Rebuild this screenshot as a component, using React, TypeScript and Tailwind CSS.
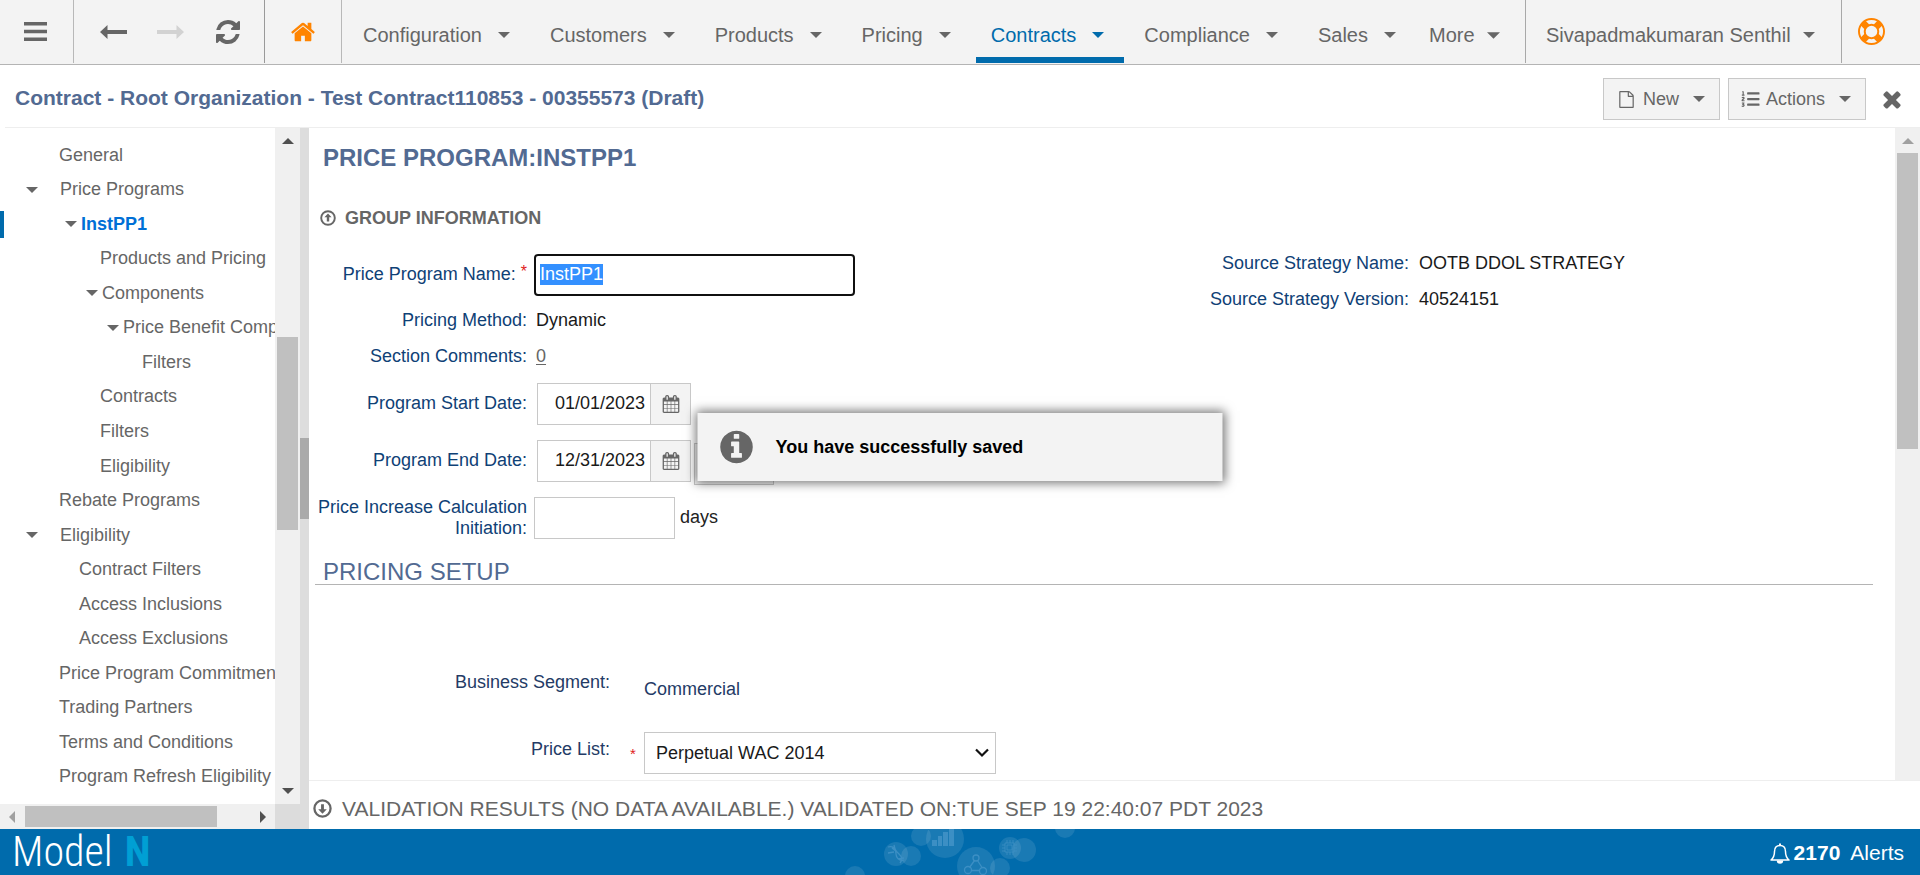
import { useEffect, useRef } from "react";
import type { ReactNode } from "react";
import { FaListOl } from "react-icons/fa";

type CaretProps = { className?: string };

function Caret({ className = "h-1.5 w-3" }: CaretProps) {
  return (
    <svg className={`shrink-0 ${className}`} viewBox="0 0 12 6" fill="currentColor" aria-hidden="true">
      <path d="M0 0h12L6 6z" />
    </svg>
  );
}

type GlyphProps = { path: string; className: string };

function Glyph({ path, className }: GlyphProps) {
  return (
    <svg className={`shrink-0 ${className}`} viewBox="0 0 1792 1792" fill="currentColor" aria-hidden="true">
      <path d={path} />
    </svg>
  );
}

const REFRESH =
  "M1639 1056q0 5-1 7-64 268-268 434.5t-478 166.5q-146 0-282.5-55t-243.5-157l-129 129q-19 19-45 19t-45-19-19-45v-448q0-26 19-45t45-19h448q26 0 45 19t19 45-19 45l-137 137q71 66 161 102t187 36q134 0 250-65t186-179q11-17 53-117 8-23 30-23h192q13 0 22.5 9.5t9.5 22.5zm25-800v448q0 26-19 45t-45 19h-448q-26 0-45-19t-19-45 19-45l138-138q-148-137-349-137-134 0-250 65t-186 179q-11 17-53 117-8 23-30 23h-199q-13 0-22.5-9.5t-9.5-22.5v-7q65-268 270-434.5t480-166.5q146 0 284 55.5t245 156.5l130-129q19-19 45-19t45 19 19 45z";
const HOME =
  "M1472 992v480q0 26-19 45t-45 19h-384v-384h-256v384h-384q-26 0-45-19t-19-45v-480q0-1 .5-3t.5-3l575-474 575 474q1 2 1 6zm223-69l-62 74q-8 9-21 11h-3q-13 0-21-7l-692-577-692 577q-12 8-24 7-13-2-21-11l-62-74q-8-10-7-23.5t11-21.5l719-599q32-26 76-26t76 26l244 204v-195q0-14 9-23t23-9h192q14 0 23 9t9 23v408l219 182q10 8 11 21.5t-7 23.5z";
const TIMES =
  "M1490 1322q0 40-28 68l-136 136q-28 28-68 28t-68-28l-294-294-294 294q-28 28-68 28t-68-28l-136-136q-28-28-28-68t28-68l294-294-294-294q-28-28-28-68t28-68l136-136q28-28 68-28t68 28l294 294 294-294q28-28 68-28t68 28l136 136q28 28 28 68t-28 68l-294 294 294 294q28 28 28 68z";
const INFO =
  "M1152 1376v-160q0-14-9-23t-23-9h-96v-512q0-14-9-23t-23-9h-320q-14 0-23 9t-9 23v160q0 14 9 23t23 9h96v320h-96q-14 0-23 9t-9 23v160q0 14 9 23t23 9h448q14 0 23-9t9-23zm-128-896v-160q0-14-9-23t-23-9h-192q-14 0-23 9t-9 23v160q0 14 9 23t23 9h192q14 0 23-9t9-23zm640 416q0 209-103 385.5t-279.5 279.5-385.5 103-385.5-103-279.5-279.5-103-385.5 103-385.5 279.5-279.5 385.5-103 385.5 103 279.5 279.5 103 385.5z";
const FILE =
  "M1596 380q28 28 48 76t20 88v1152q0 40-28 68t-68 28h-1344q-40 0-68-28t-28-68v-1600q0-40 28-68t68-28h896q40 0 88 20t76 48zm-444-244v376h376q-10-29-22-41l-313-313q-12-12-41-22zm384 1528v-1024h-416q-40 0-68-28t-28-68v-416h-768v1536h1280z";
const CALENDAR =
  "M192 1664h288v-288h-288v288zm352 0h320v-288h-320v288zm-352-352h288v-320h-288v320zm352 0h320v-320h-320v320zm-352-384h288v-288h-288v288zm736 736h320v-288h-320v288zm-384-736h320v-288h-320v288zm768 736h288v-288h-288v288zm-384-352h320v-320h-320v320zm-352-864v-288q0-13-9.5-22.5t-22.5-9.5h-64q-13 0-22.5 9.5t-9.5 22.5v288q0 13 9.5 22.5t22.5 9.5h64q13 0 22.5-9.5t9.5-22.5zm736 864h288v-320h-288v320zm-384-384h320v-288h-320v288zm384 0h288v-288h-288v288zm32-480v-288q0-13-9.5-22.5t-22.5-9.5h-64q-13 0-22.5 9.5t-9.5 22.5v288q0 13 9.5 22.5t22.5 9.5h64q13 0 22.5-9.5t9.5-22.5zm384-64v1280q0 52-38 90t-90 38h-1408q-52 0-90-38t-38-90v-1280q0-52 38-90t90-38h128v-96q0-66 47-113t113-47h64q66 0 113 47t47 113v96h384v-96q0-66 47-113t113-47h64q66 0 113 47t47 113v96h128q52 0 90 38t38 90z";
const LIFE_RING =
  "M896 0q182 0 348 71t286 191 191 286 71 348-71 348-191 286-286 191-348 71-348-71-286-191-191-286-71-348 71-348 191-286 286-191 348-71zm0 128q-190 0-361 90l194 194q82-28 167-28t167 28l194-194q-171-90-361-90zm-678 1129l194-194q-28-82-28-167t28-167l-194-194q-90 171-90 361t90 361zm678 407q190 0 361-90l-194-194q-82 28-167 28t-167-28l-194 194q171 90 361 90zm0-384q159 0 271.5-112.5t112.5-271.5-112.5-271.5-271.5-112.5-271.5 112.5-112.5 271.5 112.5 271.5 271.5 112.5zm484-217l194 194q90-171 90-361t-90-361l-194 194q28 82 28 167t-28 167z";

const MENU = ["Configuration", "Customers", "Products", "Pricing", "Contracts", "Compliance", "Sales"];

function ArrowLong({ className = "" }: CaretProps) {
  return (
    <svg className={`h-[14px] w-[27px] ${className}`} viewBox="0 0 27 14" fill="currentColor" aria-hidden="true">
      <path d="M0 7 7.500 0v5H27v4H7.500v5z" />
    </svg>
  );
}

function TopBar() {
  return (
    <header className="flex h-[65px] shrink-0 border-b border-[#b4b4b4] bg-[#f3f3f3] text-[20px] text-[#666]">
      <div className="flex h-[63px] min-w-0 flex-1">
        <button aria-label="Menu" className="flex w-[74px] items-center border-r border-[#b8b8b8] pl-6">
          <svg className="h-[19px] w-[23px]" viewBox="0 0 23 19" fill="currentColor" aria-hidden="true">
            <path d="M0 0h23v3.500H0zM0 7.700h23v3.500H0zM0 15.400h23v3.500H0z" />
          </svg>
        </button>
        <div className="flex w-[191px] items-center gap-[30px] border-r border-[#999] pl-[26px]">
          <button aria-label="Back">
            <ArrowLong />
          </button>
          <button aria-label="Forward" className="text-[#d2d2d2]">
            <ArrowLong className="rotate-180" />
          </button>
          <button aria-label="Refresh">
            <Glyph path={REFRESH} className="h-7 w-7" />
          </button>
        </div>
        <button aria-label="Home" className="flex w-[77px] items-center border-r border-[#b8b8b8] pl-[25px] text-[#ff8400]">
          <Glyph path={HOME} className="h-[26px] w-[26px]" />
        </button>
        <nav className="ml-1.5 flex gap-[5px]">
          {MENU.map((m) => (
            <button
              key={m}
              className={
                m === "Contracts"
                  ? "flex items-center gap-4 border-b-6 border-[#006bac] pt-[13px] pr-5 pl-[15px] text-[#006bac]"
                  : "flex items-center gap-4 border-b-6 border-transparent pt-[13px] pr-5 pl-[15px]"
              }
            >
              {m}
              <Caret />
            </button>
          ))}
          <button className="flex items-center gap-3 border-b-6 border-transparent pt-[13px] pl-2">
            More
            <Caret className="h-[7px] w-[13px]" />
          </button>
        </nav>
        <button className="ml-auto flex w-[317px] items-center justify-between border-r border-l border-[#a8a8a8] pt-[7px] pr-[26px] pl-5">
          Sivapadmakumaran Senthil
          <Caret />
        </button>
        <button aria-label="Help" className="flex w-[78px] items-center pl-4 text-[#ff8400]">
          <Glyph path={LIFE_RING} className="h-[27px] w-[27px]" />
        </button>
      </div>
    </header>
  );
}

function TitleBar() {
  return (
    <div className="flex h-[62px] shrink-0 items-center pr-[15px] pl-[15px] text-[#666]">
      <h1 className="flex-1 pt-1 text-[21px] font-bold text-[#526a92]">
        Contract - Root Organization - Test Contract110853 - 00355573 (Draft)
      </h1>
      <div className="flex items-center pt-1.5">
        <button className="flex h-[42px] w-[117px] items-center border border-[#c8c8c8] bg-[#f3f3f3] pl-3.5 text-[18px]">
          <Glyph path={FILE} className="mr-2 h-[19px] w-[17px]" />
          New
          <Caret className="ml-auto mr-3.5 h-1.5 w-3" />
        </button>
        <button className="ml-2 flex h-[42px] w-[138px] items-center border border-[#c8c8c8] bg-[#f3f3f3] pl-3 text-[18px]">
          <FaListOl className="mr-1.5 h-[18px] w-[19px]" aria-hidden="true" />
          Actions
          <Caret className="ml-auto mr-3.5 h-1.5 w-3" />
        </button>
        <button aria-label="Close" className="ml-[13px]">
          <Glyph path={TIMES} className="h-[26px] w-[26px]" />
        </button>
      </div>
    </div>
  );
}

type TreeItem = { label: string; indent: string; open?: boolean; top?: boolean; selected?: boolean };

const TREE: TreeItem[] = [
  { label: "General", indent: "pl-[59px]" },
  { label: "Price Programs", indent: "pl-[26px]", open: true, top: true },
  { label: "InstPP1", indent: "pl-[65px]", open: true, selected: true },
  { label: "Products and Pricing", indent: "pl-[100px]" },
  { label: "Components", indent: "pl-[86px]", open: true },
  { label: "Price Benefit Components", indent: "pl-[107px]", open: true },
  { label: "Filters", indent: "pl-[142px]" },
  { label: "Contracts", indent: "pl-[100px]" },
  { label: "Filters", indent: "pl-[100px]" },
  { label: "Eligibility", indent: "pl-[100px]" },
  { label: "Rebate Programs", indent: "pl-[59px]" },
  { label: "Eligibility", indent: "pl-[26px]", open: true, top: true },
  { label: "Contract Filters", indent: "pl-[79px]" },
  { label: "Access Inclusions", indent: "pl-[79px]" },
  { label: "Access Exclusions", indent: "pl-[79px]" },
  { label: "Price Program Commitments", indent: "pl-[59px]" },
  { label: "Trading Partners", indent: "pl-[59px]" },
  { label: "Terms and Conditions", indent: "pl-[59px]" },
  { label: "Program Refresh Eligibility", indent: "pl-[59px]" },
];

function Sidebar() {
  return (
    <aside className="flex w-[300px] shrink-0 flex-col">
      <div className="flex min-h-0 flex-1">
        <nav className="min-w-0 flex-1 overflow-hidden py-2.5">
          <ul className="flex h-full flex-col text-[18px] text-[#666]">
            {TREE.map((t, i) => (
              <li key={i} className={`relative flex flex-1 items-center whitespace-nowrap ${t.indent}`}>
                {t.selected && <span className="absolute left-0 h-[27px] w-1 bg-[#006bac]" />}
                {t.open && <Caret className={t.top ? "mr-[22px] h-1.5 w-3" : "mr-1 h-1.5 w-3"} />}
                <a href="#" className={t.selected ? "font-bold text-[#006fd6]" : ""}>
                  {t.label}
                </a>
              </li>
            ))}
          </ul>
        </nav>
        <div className="flex w-[25px] flex-col items-center bg-[#f0f0f0] text-[#505050]">
          <Caret className="mt-2.5 h-1.5 w-3 rotate-180" />
          <div className="mt-[193px] h-[193px] w-[21px] bg-[#c0c0c0]" />
          <Caret className="mt-auto mb-2.5 h-1.5 w-3" />
        </div>
      </div>
      <div className="flex h-[25px]">
        <div className="flex flex-1 items-center bg-[#f0f0f0]">
          <svg className="ml-[9px] h-3 w-1.5 text-[#a0a0a0]" viewBox="0 0 6 12" fill="currentColor" aria-hidden="true">
            <path d="M6 0v12L0 6z" />
          </svg>
          <div className="ml-2.5 h-[21px] w-[192px] bg-[#c0c0c0]" />
          <svg className="mr-[9px] ml-auto h-3 w-1.5 text-[#505050]" viewBox="0 0 6 12" fill="currentColor" aria-hidden="true">
            <path d="M0 0v12l6-6z" />
          </svg>
        </div>
        <div className="w-[25px] bg-[#dcdcdc]" />
      </div>
    </aside>
  );
}

type RowProps = { label: ReactNode; htmlFor?: string; compact?: boolean; children: ReactNode };

function FormRow({ label, htmlFor, compact, children }: RowProps) {
  return (
    <div className={compact ? "flex h-9 items-center gap-[9px] pb-0.5" : "flex h-[57px] items-center gap-[7px]"}>
      <label htmlFor={htmlFor} className="w-[218px] shrink-0 text-right leading-[21px] text-[#0f4176]">
        {label}
      </label>
      {children}
    </div>
  );
}

type DateProps = { id: string; value: string };

function DateField({ id, value }: DateProps) {
  return (
    <div className="ml-[3px] flex h-[42px] w-[154px] border border-[#c8c8c8]">
      <input id={id} defaultValue={value} className="w-[113px] border-r border-[#c8c8c8] pr-[5px] text-right text-[#1a1a1a] outline-none" />
      <button aria-label="Open calendar" className="flex flex-1 items-center justify-center bg-[#f3f3f3] text-[#666]">
        <Glyph path={CALENDAR} className="h-[18px] w-[18px]" />
      </button>
    </div>
  );
}

function CircleArrow({ className }: { className: string }) {
  return (
    <svg className={`shrink-0 ${className}`} viewBox="0 0 20 20" aria-hidden="true">
      <circle cx="10" cy="10" r="8.500" fill="none" stroke="currentColor" strokeWidth="2.400" />
      <path d="M10 4.500l4.500 4.700h-3v5.300h-3V9.200h-3z" fill="currentColor" />
    </svg>
  );
}

function MainPanel() {
  const nameRef = useRef<HTMLInputElement>(null);
  useEffect(() => {
    nameRef.current?.focus();
    nameRef.current?.select();
  }, []);
  return (
    <main className="flex min-w-0 flex-1 flex-col">
      <div className="flex min-h-0 flex-1">
        <div className="min-w-0 flex-1 overflow-hidden text-[18px]">
          <h2 className="pt-[15px] pl-3.5 text-[24px] leading-[30px] font-bold text-[#526a92]">PRICE PROGRAM:INSTPP1</h2>
          <h3 className="mt-[33px] flex items-center gap-[9px] pl-[11px] leading-6 font-bold text-[#666]">
            <CircleArrow className="h-4 w-4" />
            GROUP INFORMATION
          </h3>
          <div className="mt-4 flex">
            <div className="w-[900px] shrink-0">
              <FormRow
                htmlFor="program-name"
                label={
                  <>
                    Price Program Name:{" "}
                    <span className="align-text-top text-[16px] leading-none text-[#e02020]">*</span>
                  </>
                }
              >
                <input
                  id="program-name"
                  ref={nameRef}
                  defaultValue="InstPP1"
                  className="h-[42px] w-[321px] rounded border-2 border-[#101010] px-1 text-black outline-none selection:bg-[#3390ff] selection:text-white"
                />
              </FormRow>
              <FormRow label="Pricing Method:" compact>
                <span className="text-[#1a1a1a]">Dynamic</span>
              </FormRow>
              <FormRow label="Section Comments:" compact>
                <a href="#" className="text-[#666] underline underline-offset-2">
                  0
                </a>
              </FormRow>
              <FormRow label="Program Start Date:" htmlFor="start-date">
                <DateField id="start-date" value="01/01/2023" />
              </FormRow>
              <FormRow label="Program End Date:" htmlFor="end-date">
                <DateField id="end-date" value="12/31/2023" />
                <button aria-label="Extend" className="-ml-1 mt-1.5 h-[42px] w-20 border border-[#c8c8c8] bg-[#f3f3f3]" />
              </FormRow>
              <FormRow label="Price Increase Calculation Initiation:" htmlFor="initiation">
                <input id="initiation" className="h-[42px] w-[141px] border border-[#c8c8c8] px-2 outline-none" />
                <span className="-ml-0.5 text-[#222]">days</span>
              </FormRow>
            </div>
            <dl className="grid grid-cols-[200px_auto] content-start gap-x-2.5 gap-y-3 pt-[5px] leading-6">
              <dt className="text-right whitespace-nowrap text-[#0f4176]">Source Strategy Name:</dt>
              <dd className="text-[#1a1a1a]">OOTB DDOL STRATEGY</dd>
              <dt className="text-right whitespace-nowrap text-[#0f4176]">Source Strategy Version:</dt>
              <dd className="text-[#1a1a1a]">40524151</dd>
            </dl>
          </div>
          <h2 className="mt-3.5 mr-[22px] ml-1.5 border-b border-[#b4b4b4] pl-2 text-[24px] leading-6 text-[#526a92]">
            PRICING SETUP
          </h2>
          <div className="grid grid-cols-[301px_34px_352px] pt-[82px] text-[#243b66]">
            <span className="h-[65px] text-right leading-[30px]">Business Segment:</span>
            <span />
            <span className="pt-[7px] leading-[30px]">Commercial</span>
            <label htmlFor="price-list" className="pt-0.5 text-right leading-[30px]">
              Price List:
            </label>
            <span className="pt-2.5 pl-5 text-[15px] leading-6 text-[#e02020]">*</span>
            <div className="relative h-[42px]">
              <select
                id="price-list"
                className="h-[42px] w-full appearance-none border border-[#c8c8c8] bg-white pl-[11px] text-[18px] text-[#1a1a1a] outline-none"
              >
                <option>Perpetual WAC 2014</option>
              </select>
              <svg className="pointer-events-none absolute top-4 right-[7px] h-2.5 w-3.5" viewBox="0 0 14 10" fill="none" stroke="#111" strokeWidth="2.200" aria-hidden="true">
                <path d="M1 1.500l6 6 6-6" />
              </svg>
            </div>
          </div>
        </div>
        <div className="flex w-[25px] shrink-0 flex-col items-center bg-[#f0f0f0] text-[#a0a0a0]">
          <Caret className="mt-2.5 h-1.5 w-3 rotate-180" />
          <div className="mt-[9px] h-[296px] w-[21px] bg-[#c0c0c0]" />
        </div>
      </div>
      <div className="flex h-[49px] shrink-0 items-center gap-2.5 border-t border-[#eee] pt-[7px] pl-1 text-[21px] text-[#666]">
        <CircleArrow className="h-[19px] w-[19px] rotate-180" />
        VALIDATION RESULTS (NO DATA AVAILABLE.) VALIDATED ON:TUE SEP 19 22:40:07 PDT 2023
      </div>
    </main>
  );
}

function FooterArt() {
  return (
    <svg className="ml-6 h-[46px] w-[260px]" viewBox="0 0 260 46" fill="none" aria-hidden="true">
      <g fill="#fff" fillOpacity="0.1">
        <circle cx="15" cy="47" r="10" />
        <circle cx="56" cy="25" r="12" />
        <circle cx="71" cy="27" r="10" />
        <circle cx="81" cy="7" r="10" />
        <circle cx="105" cy="10" r="19" />
        <circle cx="136" cy="37" r="19" />
        <circle cx="160" cy="39" r="10" />
        <circle cx="170" cy="19" r="11" />
        <circle cx="184" cy="21" r="12" />
        <circle cx="225" cy="-1" r="10" />
      </g>
      <path d="M92 11h5v6h-5zM98 7h4v10h-4zM103 3h5v14h-5zM109 0h5v17h-5z" fill="#3c8fc4" />
      <g stroke="#3c8fc4" strokeWidth="1.300">
        <circle cx="136" cy="29" r="3" />
        <circle cx="128" cy="41" r="3.500" />
        <circle cx="143" cy="42" r="3.500" />
        <path d="M134.500 31.500l-5 7M137.500 31.500l4.500 7M131.500 41.500h8" />
        <path d="M48 18c7-2 8 4 8 7s3 8 8 6M54 16c1 5 2 6 5 9s4 5 1 9M48 24l6-1M58 30l6-1M52 19l5 4" />
        <path d="M165 14h9v9h-9zM167 16h5v5h-5zM167 14v-3M170 14v-3M173 14v-3M167 23v3M170 23v3M173 23v3M165 16h-3M165 19h-3M165 22h-3M174 16h3M174 19h3M174 22h3" strokeWidth="0.800" />
      </g>
    </svg>
  );
}

function Footer() {
  return (
    <footer className="flex h-[46px] shrink-0 items-center justify-between overflow-hidden bg-[#006bac] pr-4 pl-3 text-white">
      <div className="flex flex-1 items-center gap-3 font-['Roboto_Condensed','Noto_Sans_Condensed','Open_Sans_Condensed',Roboto,sans-serif] text-[42px] leading-[46px] font-light">
        <span>Model</span>
        <span className="font-bold text-[#009fd4]">N</span>
      </div>
      <FooterArt />
      <a href="#" className="flex flex-1 items-center justify-end pt-0.5 text-[21px]">
        <svg className="mr-1 h-[21px] w-[20px]" viewBox="0 0 20 21" fill="none" aria-hidden="true">
          <path d="M1 17c2.500-2 3.500-4.500 3.500-8.500C4.500 4.500 7 2.600 10 2.600s5.500 1.900 5.500 5.900c0 4 1 6.500 3.500 8.500z" stroke="currentColor" strokeWidth="1.500" strokeLinejoin="round" />
          <path d="M9 .5h2v2H9zM6.800 17.500h6.400a3.200 3.200 0 0 1-6.400 0z" fill="currentColor" />
        </svg>
        <strong>2170</strong>
        <span className="ml-2.5">Alerts</span>
      </a>
    </footer>
  );
}

export default function App() {
  return (
    <div className="relative flex h-screen flex-col overflow-hidden bg-white font-['Liberation_Sans',Arial,sans-serif]">
      <TopBar />
      <TitleBar />
      <div className="ml-[5px] h-px shrink-0 bg-[#eee]" />
      <div className="flex min-h-0 flex-1">
        <Sidebar />
        <div className="w-[9px] shrink-0 bg-[#ddd] pt-[310px]">
          <div className="h-[81px] bg-[#aaa]" />
        </div>
        <MainPanel />
      </div>
      <Footer />
      <div
        role="status"
        className="absolute top-[413px] left-1/2 flex h-[68px] w-[525px] -translate-x-1/2 items-center bg-[#f3f3f3] pl-5 text-[18px] font-bold text-black shadow-[0_0_10px_2px_rgba(0,0,0,0.55)]"
      >
        <Glyph path={INFO} className="mr-5 h-[38px] w-[38px] text-[#666]" />
        You have successfully saved
      </div>
    </div>
  );
}
